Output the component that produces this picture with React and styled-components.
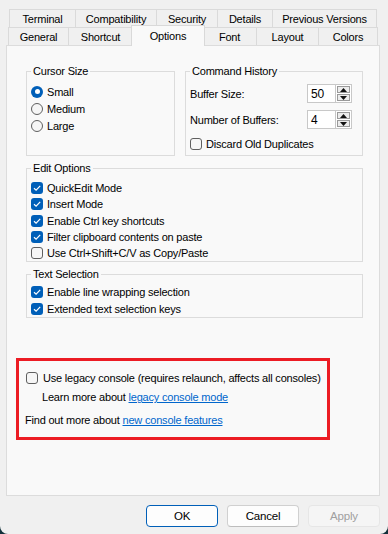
import React from "react";
import styled, { createGlobalStyle } from "styled-components";

const GlobalStyle = createGlobalStyle`
  html, body {
    margin: 0;
    padding: 0;
    background: #12303a;
  }
  body {
    font-family: "Liberation Sans", Arial, sans-serif;
    font-size: 11px;
    letter-spacing: -0.2px;
    color: #000;
  }
`;

const Window = styled.div`
  width: 388px;
  height: 534px;
  box-sizing: border-box;
  padding-top: 9px;
  background: #f0f0f0;
  border-radius: 0 0 8px 8px;
  overflow: hidden;
  display: flex;
  flex-direction: column;
`;

const TabRow = styled.div`
  display: flex;
  height: 18px;
  padding-left: ${({ $left }) => $left}px;
  position: relative;
  z-index: ${({ $front }) => ($front ? 2 : 1)};
`;

const Tab = styled.div`
  box-sizing: border-box;
  width: ${({ $w }) => $w}px;
  height: 100%;
  border-top: 1px solid #dadada;
  border-right: 1px solid #dadada;
  background: #f0f0f0;
  display: flex;
  align-items: center;
  justify-content: center;
  &:first-child {
    border-left: 1px solid #dadada;
  }
`;

const ActiveTab = styled.div`
  box-sizing: border-box;
  width: ${({ $w }) => $w + 4}px;
  height: 21px;
  margin: -2px -2px 0 -2px;
  border: 1px solid #d9d9d9;
  border-bottom: none;
  background: #f9f9f9;
  display: flex;
  align-items: center;
  justify-content: center;
  padding-bottom: 1px;
  position: relative;
  z-index: 3;
`;

const Panel = styled.div`
  box-sizing: border-box;
  margin-left: 6px;
  width: 374px;
  height: 451px;
  border: 1px solid #dcdcdc;
  background: #f9f9f9;
  padding: 18px 16px 0 19px;
  display: flex;
  flex-direction: column;
`;

const TopRow = styled.div`
  display: flex;
  gap: 10px;
  height: 92px;
`;

const Group = styled.fieldset`
  box-sizing: border-box;
  margin: ${({ $top }) => $top || 0}px 0 0 0;
  width: ${({ $w }) => ($w ? `${$w}px` : "auto")};
  min-width: 0;
  border: 1px solid #dcdcdc;
  padding: ${({ $pad }) => $pad || 0}px 10px 0 4px;
  display: flex;
  flex-direction: column;
`;

const Legend = styled.legend`
  padding: 0 2px;
  line-height: 14px;
`;

const OptionRow = styled.div`
  display: flex;
  align-items: center;
  gap: 4px;
  height: ${({ $h }) => $h}px;
  margin-top: ${({ $top }) => $top || 0}px;
`;

const RadioMark = styled.span`
  box-sizing: border-box;
  width: 12px;
  height: 12px;
  border-radius: 50%;
  flex-shrink: 0;
  border: ${({ $on }) => ($on ? "none" : "1px solid #5f5f5f")};
  background: ${({ $on }) => ($on ? "#005fb8" : "#f6f6f6")};
  display: flex;
  align-items: center;
  justify-content: center;
  &::after {
    content: "";
    display: ${({ $on }) => ($on ? "block" : "none")};
    width: 5px;
    height: 5px;
    border-radius: 50%;
    background: #fff;
  }
`;

const CheckBox = styled.span`
  box-sizing: border-box;
  width: 12px;
  height: 12px;
  border-radius: 3px;
  flex-shrink: 0;
  border: ${({ $on }) => ($on ? "none" : "1px solid #5f5f5f")};
  background: ${({ $on }) => ($on ? "#005fb8" : "#f6f6f6")};
  display: flex;
  align-items: center;
  justify-content: center;
`;

const FieldRow = styled.div`
  display: flex;
  align-items: center;
  justify-content: space-between;
  height: 19px;
  margin-top: ${({ $top }) => $top}px;
`;

const Spinner = styled.div`
  display: flex;
  height: 19px;
`;

const SpinInput = styled.div`
  box-sizing: border-box;
  width: 28px;
  height: 100%;
  background: #fff;
  border: 1px solid #c8c8c8;
  border-right: none;
  padding-left: 3px;
  display: flex;
  align-items: center;
  font-size: 12px;
`;

const SpinButtons = styled.div`
  display: flex;
  flex-direction: column;
  width: 17px;
  height: 100%;
  box-sizing: border-box;
  border: 1px solid #c8c8c8;
  background: #fff;
  padding: 1px;
  gap: 1px;
`;

const SpinBtn = styled.div`
  flex: 1;
  background: #ececec;
  border: 1px solid #9a9a9a;
  display: flex;
  align-items: center;
  justify-content: center;
`;

const Callout = styled.div`
  box-sizing: border-box;
  margin: 40px 0 0 -10px;
  width: 314px;
  height: 82px;
  border: 3px solid #ec1c24;
  padding: 9px 0 0 6px;
  display: flex;
  flex-direction: column;
`;

const CalloutLine = styled.div`
  height: 16px;
  line-height: 16px;
  margin-top: ${({ $top }) => $top || 0}px;
  padding-left: ${({ $indent }) => $indent || 0}px;
  white-space: nowrap;
`;

const Link = styled.a`
  color: #0066cc;
  text-decoration: underline;
`;

const Footer = styled.div`
  display: flex;
  justify-content: flex-end;
  gap: 9px;
  padding: 9px 8px 0 0;
`;

const Button = styled.button`
  box-sizing: border-box;
  width: 72px;
  height: 22px;
  border-radius: 4px;
  font-family: inherit;
  font-size: 11.5px;
  letter-spacing: -0.2px;
  padding: 0;
  background: ${({ $disabled }) => ($disabled ? "#f5f5f5" : "#fdfdfd")};
  color: ${({ $disabled }) => ($disabled ? "#a0a0a0" : "#000")};
  border: 1px solid
    ${({ $primary, $disabled }) =>
      $primary ? "#005fb8" : $disabled ? "#e6e6e6" : "#d0d0d0"};
  border-bottom-color: ${({ $primary, $disabled }) =>
    $primary ? "#005fb8" : $disabled ? "#e6e6e6" : "#bdbdbd"};
`;

const Check = ({ on }) => (
  <CheckBox $on={on}>
    {on && (
      <svg width="10" height="10" viewBox="0 0 10 10">
        <path d="M2 5.2 L4.1 7.2 L8.2 2.9" fill="none" stroke="#fff" strokeWidth="1.2" />
      </svg>
    )}
  </CheckBox>
);

const Arrow = ({ up }) => (
  <svg width="7" height="4" viewBox="0 0 7 4">
    <path d={up ? "M0 4 L3.5 0 L7 4 Z" : "M0 0 L3.5 4 L7 0 Z"} fill="#111" />
  </svg>
);

const NumberField = ({ value }) => (
  <Spinner>
    <SpinInput>{value}</SpinInput>
    <SpinButtons>
      <SpinBtn>
        <Arrow up />
      </SpinBtn>
      <SpinBtn>
        <Arrow />
      </SpinBtn>
    </SpinButtons>
  </Spinner>
);

const backTabs = [
  ["Terminal", 67],
  ["Compatibility", 81],
  ["Security", 61],
  ["Details", 55],
  ["Previous Versions", 104],
];

const frontTabs = [
  ["General", 61],
  ["Shortcut", 64],
  ["Options", 70],
  ["Font", 54],
  ["Layout", 62],
  ["Colors", 59],
];

const editOptions = [
  ["QuickEdit Mode", true],
  ["Insert Mode", true],
  ["Enable Ctrl key shortcuts", true],
  ["Filter clipboard contents on paste", true],
  ["Use Ctrl+Shift+C/V as Copy/Paste", false],
];

export default function App() {
  return (
    <>
      <GlobalStyle />
      <Window>
        <TabRow $left={9}>
          {backTabs.map(([name, w]) => (
            <Tab key={name} $w={w}>
              {name}
            </Tab>
          ))}
        </TabRow>
        <TabRow $left={8} $front>
          {frontTabs.map(([name, w]) =>
            name === "Options" ? (
              <ActiveTab key={name} $w={w}>
                {name}
              </ActiveTab>
            ) : (
              <Tab key={name} $w={w}>
                {name}
              </Tab>
            )
          )}
        </TabRow>

        <Panel>
          <TopRow>
            <Group $w={149} $pad={5}>
              <Legend>Cursor Size</Legend>
              <OptionRow $h={17}>
                <RadioMark $on />
                Small
              </OptionRow>
              <OptionRow $h={17}>
                <RadioMark />
                Medium
              </OptionRow>
              <OptionRow $h={17}>
                <RadioMark />
                Large
              </OptionRow>
            </Group>
            <Group $w={178}>
              <Legend>Command History</Legend>
              <FieldRow $top={6}>
                <span>Buffer Size:</span>
                <NumberField value="50" />
              </FieldRow>
              <FieldRow $top={7}>
                <span>Number of Buffers:</span>
                <NumberField value="4" />
              </FieldRow>
              <OptionRow $h={15} $top={7}>
                <Check />
                Discard Old Duplicates
              </OptionRow>
            </Group>
          </TopRow>

          <Group $top={5} $pad={5}>
            <Legend>Edit Options</Legend>
            {editOptions.map(([label, on]) => (
              <OptionRow key={label} $h={16.25}>
                <Check on={on} />
                {label}
              </OptionRow>
            ))}
          </Group>

          <Group $top={5} $pad={2}>
            <Legend>Text Selection</Legend>
            <OptionRow $h={17}>
              <Check on />
              Enable line wrapping selection
            </OptionRow>
            <OptionRow $h={17}>
              <Check on />
              Extended text selection keys
            </OptionRow>
          </Group>

          <Callout>
            <OptionRow $h={16} style={{ paddingLeft: 1, gap: 5 }}>
              <Check />
              Use legacy console (requires relaunch, affects all consoles)
            </OptionRow>
            <CalloutLine $top={3} $indent={17}>
              Learn more about <Link>legacy console mode</Link>
            </CalloutLine>
            <CalloutLine $top={7}>
              Find out more about <Link>new console features</Link>
            </CalloutLine>
          </Callout>
        </Panel>

        <Footer>
          <Button $primary>OK</Button>
          <Button>Cancel</Button>
          <Button $disabled>Apply</Button>
        </Footer>
      </Window>
    </>
  );
}
